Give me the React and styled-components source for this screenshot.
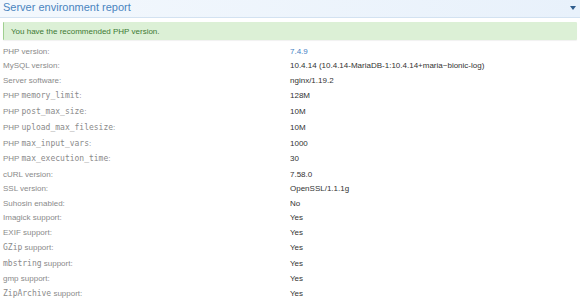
import React from "react";
import styled, { createGlobalStyle } from "styled-components";

const Global = createGlobalStyle`
  html, body { margin: 0; padding: 0; background: #fff; }
  body { font-family: "Liberation Sans", Arial, sans-serif; }
`;

const Panel = styled.div`
  width: 580px;
  height: 300px;
  overflow: hidden;
  background: #fff;
`;

const Header = styled.div`
  height: 17px;
  display: flex;
  align-items: center;
  justify-content: space-between;
  padding: 0 3px 0 3px;
  background: linear-gradient(to right, #f3f8fd, #e8f1fb);
  border-bottom: 1px solid #d3e2f1;
`;

const Title = styled.div`
  font-size: 11px;
  line-height: 12px;
  color: #4a85bf;
  margin-top: -3px;
`;

const Caret = styled.svg`
  width: 6px;
  height: 4px;
  margin-right: 1px;
  margin-top: -2px;
`;

const Alert = styled.div`
  margin: 4px 3px 3px 3px;
  height: 18px;
  display: flex;
  align-items: center;
  padding-left: 7px;
  background: #dcf0d6;
  border-left: 1px solid #9fcf8f;
  border-radius: 1px;
  box-shadow: 0 1px 1px rgba(0, 0, 0, 0.06);
  font-size: 8px;
  color: #3c7a34;
`;

const Table = styled.div`
  display: flex;
  flex-direction: column;
  padding-top: 1px;
`;

const Row = styled.div`
  display: grid;
  grid-template-columns: 287px 1fr;
  padding-left: 3px;
  height: ${(p) => (p.$mono ? "15.8px" : "14.6px")};
  align-items: center;
  font-size: 8px;
`;

const Label = styled.div`
  color: #8a8a8a;
  white-space: nowrap;
`;

const Value = styled.div`
  color: ${(p) => (p.$link ? "#3f82c4" : "#333")};
  white-space: nowrap;
`;

const Code = styled.code`
  font-family: "DejaVu Sans Mono", monospace;
  font-size: 8px;
  color: #8a8a8a;
`;

const rows = [
  { label: ["PHP version:"], value: "7.4.9", link: true },
  { label: ["MySQL version:"], value: "10.4.14 (10.4.14-MariaDB-1:10.4.14+maria~bionic-log)" },
  { label: ["Server software:"], value: "nginx/1.19.2" },
  { label: ["PHP ", { c: "memory_limit" }, ":"], value: "128M" },
  { label: ["PHP ", { c: "post_max_size" }, ":"], value: "10M" },
  { label: ["PHP ", { c: "upload_max_filesize" }, ":"], value: "10M" },
  { label: ["PHP ", { c: "max_input_vars" }, ":"], value: "1000" },
  { label: ["PHP ", { c: "max_execution_time" }, ":"], value: "30" },
  { label: ["cURL version:"], value: "7.58.0" },
  { label: ["SSL version:"], value: "OpenSSL/1.1.1g" },
  { label: ["Suhosin enabled:"], value: "No" },
  { label: ["Imagick support:"], value: "Yes" },
  { label: ["EXIF support:"], value: "Yes" },
  { label: [{ c: "GZip" }, " support:"], value: "Yes" },
  { label: [{ c: "mbstring" }, " support:"], value: "Yes" },
  { label: ["gmp support:"], value: "Yes" },
  { label: [{ c: "ZipArchive" }, " support:"], value: "Yes" },
];

export default function App() {
  return (
    <>
      <Global />
      <Panel>
        <Header>
          <Title>Server environment report</Title>
          <Caret viewBox="0 0 6 4">
            <path d="M0 0 H6 L3 4 Z" fill="#2f5c8c" />
          </Caret>
        </Header>
        <Alert>You have the recommended PHP version.</Alert>
        <Table>
          {rows.map((r, i) => {
            const mono = r.label.some((p) => typeof p === "object");
            return (
              <Row key={i} $mono={mono}>
                <Label>
                  {r.label.map((p, j) =>
                    typeof p === "object" ? <Code key={j}>{p.c}</Code> : <span key={j}>{p}</span>
                  )}
                </Label>
                <Value $link={r.link}>{r.value}</Value>
              </Row>
            );
          })}
        </Table>
      </Panel>
    </>
  );
}
